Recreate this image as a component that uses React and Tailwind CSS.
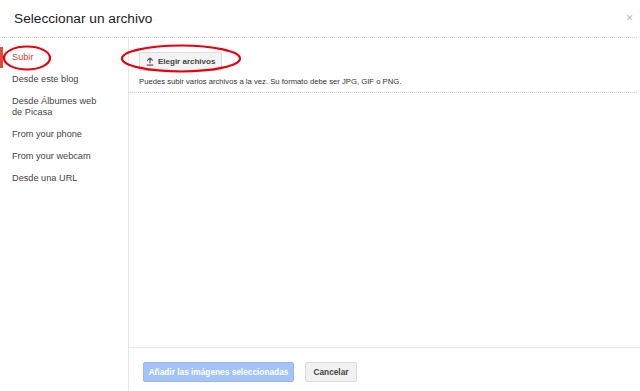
import React from "react";

const items = [
  { label: "Desde este blog" },
  { label: "Desde Álbumes web de Picasa", two: true },
  { label: "From your phone" },
  { label: "From your webcam" },
  { label: "Desde una URL" },
];

export default function App() {
  return (
    <div
      className="relative w-[640px] h-[391px] bg-white flex flex-col overflow-hidden"
      style={{ fontFamily: '"Liberation Sans", Arial, sans-serif' }}
    >
      {/* header */}
      <div className="h-[38px] shrink-0 flex items-center justify-between border-b border-dotted border-[#ccd5de] mr-[3px]">
        <div className="pl-[14px] pt-[1px] text-[13.7px] text-[#222] leading-none">Seleccionar un archivo</div>
        <div className="pr-[4px] pb-[1px] text-[12px] leading-none text-[#b3bccb]">×</div>
      </div>

      <div className="flex flex-1 min-h-0">
        {/* sidebar */}
        <div className="w-[129px] shrink-0 border-r border-[#e6e6e6] pt-[8px]">
          <div className="relative py-[5.5px] pl-[12px] text-[9.2px] leading-[11px] text-[#d23f31]">
            <div className="absolute left-0 top-[1px] w-[3px] h-[21px] bg-[#dd4b39]" />
            Subir
          </div>
          {items.map((it) => (
            <div
              key={it.label}
              className="py-[5.5px] pl-[12px] pr-[10px] text-[9.2px] leading-[11px] text-[#444]"
            >
              {it.two ? (
                <>
                  Desde Álbumes web
                  <br />
                  de Picasa
                </>
              ) : (
                it.label
              )}
            </div>
          ))}
        </div>

        {/* main */}
        <div className="flex-1 flex flex-col min-w-0">
          <div className="h-[55px] shrink-0 border-b border-dotted border-[#ccd5de] mr-[3px] pl-[10px] pt-[11px]">
            <div className="inline-flex items-center h-[19px] w-[83px] pl-[6px] gap-[3px] bg-[#f3f3f3] border border-[#dcdcdc] rounded-[2px] text-[8px] font-bold text-[#444] leading-none">
              <svg width="8" height="9" viewBox="0 0 8 9" className="mr-[1px]">
                <path d="M4 0.8 L1.2 3.6 M4 0.8 L6.8 3.6 M4 1 V6.2 M0.8 8.2 H7.2" stroke="#555" strokeWidth="1.2" fill="none" />
              </svg>
              Elegir archivos
            </div>
            <div className="mt-[4px] text-[7.7px] leading-[10px] text-[#333]">
              Puedes subir varios archivos a la vez. Su formato debe ser JPG, GIF o PNG.
            </div>
          </div>
          <div className="flex-1" />
          <div className="h-[44px] shrink-0 border-t border-[#e8e8e8] pl-[14px] pt-[14px] flex gap-[11px] items-start">
            <div className="h-[20px] w-[151px] flex items-center justify-center bg-[#a4c4f8] border border-[#98b8f0] rounded-[2px] text-[8.3px] font-bold text-white leading-none">
              Añadir las imágenes seleccionadas
            </div>
            <div className="h-[20px] w-[52px] flex items-center justify-center bg-[#f1f1f1] border border-[#dcdcdc] rounded-[2px] text-[8.3px] font-bold text-[#444] leading-none">
              Cancelar
            </div>
          </div>
        </div>
      </div>

      {/* red annotation ellipses */}
      <svg className="absolute left-0 top-0 pointer-events-none" width="640" height="391">
        <ellipse cx="27" cy="58" rx="23" ry="11.5" fill="none" stroke="#e5000f" strokeWidth="2.2" />
        <ellipse cx="181" cy="58.5" rx="59" ry="13" fill="none" stroke="#e5000f" strokeWidth="2.2" />
      </svg>
    </div>
  );
}
